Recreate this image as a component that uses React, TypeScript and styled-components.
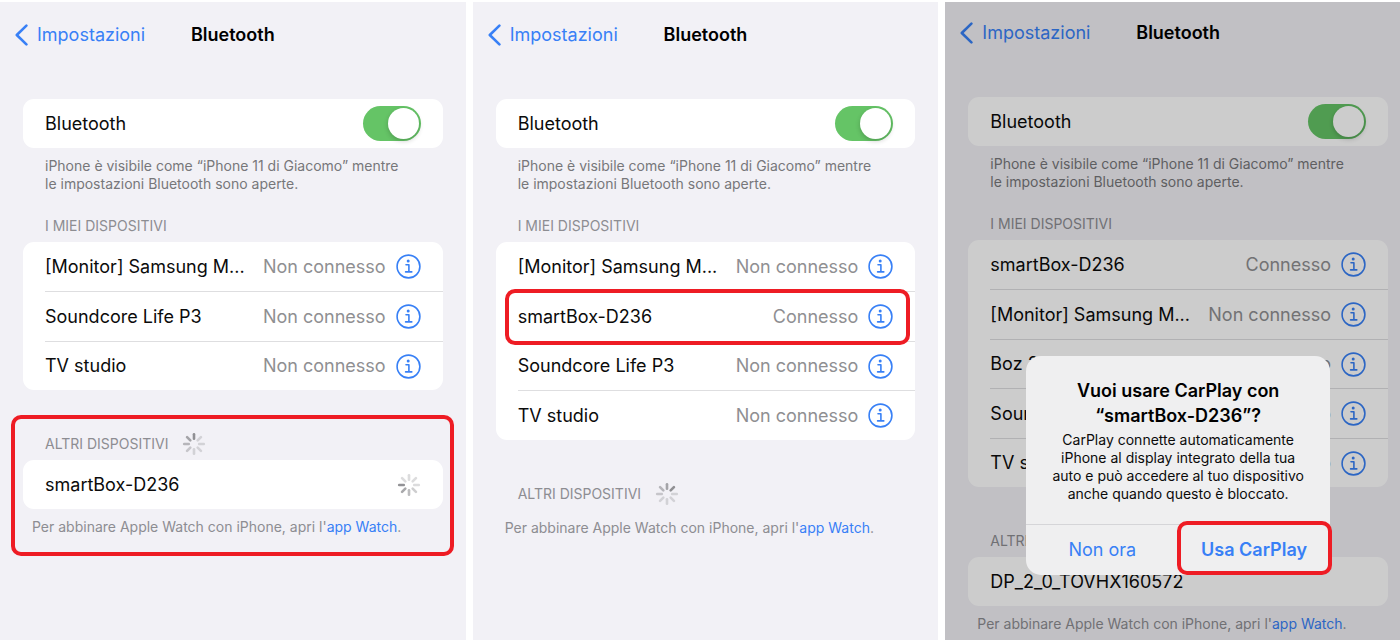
import React from 'react';
import styled, { createGlobalStyle, css } from 'styled-components';

const GlobalStyle = createGlobalStyle`
  *, *::before, *::after { box-sizing: border-box; }
  body {
    margin: 0;
    background: #fff;
    color: #0b0b0b;
    font-family: Inter, 'Liberation Sans', sans-serif;
    font-size: 18px;
    line-height: 24px;
  }
  button { font: inherit; border: 0; padding: 0; background: none; cursor: pointer; }
  h1, h2, p, ul { margin: 0; padding: 0; font-weight: inherit; font-size: inherit; }
`;

const blue = '#3880f6';
const red = '#ee1c24';

const Page = styled.main`
  overflow: hidden;
  min-height: 100vh;
  display: flex;
  padding-top: 2px;
`;

/* The last phone runs slightly past the right edge of the window. */
const Phones = styled.div`
  flex: 1;
  display: grid;
  grid-template-columns: repeat(3, minmax(0, 1fr));
  gap: 7px;
  margin-right: -11px;
`;

const Phone = styled.section<{ $raised?: boolean }>`
  position: relative;
  background: #f2f1f6;
  padding: ${p => (p.$raised ? 15 : 17)}px 23px 8px;
`;

const NavBar = styled.header`
  display: grid;
  grid-template-columns: 1fr auto 1fr;
  align-items: center;
  height: 32px;
  margin: 0 -8px 48px;
`;

const BackLink = styled.a`
  display: flex;
  align-items: center;
  gap: 9px;
  color: ${blue};
  text-decoration: none;
`;

const Title = styled.h1`
  color: #000;
  font-weight: 600;
`;

const Card = styled.ul`
  list-style: none;
  background: #fff;
  border-radius: 11px;
`;

const redFrame = css`
  content: '';
  position: absolute;
  border: 4px solid ${red};
  border-radius: 10px;
  pointer-events: none;
`;

const Row = styled.li<{ $marked?: boolean }>`
  position: relative;
  display: flex;
  padding-left: 22px;
  ${p => p.$marked && css`
    z-index: 1;
    &::after { ${redFrame} inset: -2px 5px -4px 9px; }
  `}
`;

const RowBody = styled.div`
  flex: 1;
  display: flex;
  align-items: center;
  gap: 10px;
  height: 49px;
  padding-right: 22px;
  ${Row} + ${Row} & { border-top: 1px solid #dedee0; }
  ${Row}:nth-child(even) & { height: 50px; }
`;

const Name = styled.span`
  flex: 1;
  white-space: nowrap;
`;

const ToggleLabel = styled.label`
  flex: 1;
`;

const State = styled.span`
  color: #8f8f92;
  white-space: nowrap;
`;

const InfoButton = styled.button`
  display: flex;
  color: ${blue};
`;

const Toggle = styled.input`
  appearance: none;
  width: 58px;
  height: 35px;
  margin: 0;
  padding: 2px;
  border-radius: 18px;
  background: #65c466;
  display: flex;
  justify-content: flex-end;
  cursor: pointer;
  &::before {
    content: '';
    width: 31px;
    height: 31px;
    border-radius: 50%;
    background: #fff;
    box-shadow: 0 2px 5px rgba(0, 0, 0, 0.2);
  }
  &:not(:checked) { background: #e9e9eb; justify-content: flex-start; }
`;

const Note = styled.p`
  padding: 9px 22px 0;
  color: #77777a;
  font-size: 14px;
  line-height: 18px;
`;

const ListHeading = styled.h2`
  display: flex;
  align-items: center;
  gap: 14px;
  height: 24px;
  padding-left: 22px;
  color: #8d8d92;
  && { font-size: 14px; }
  line-height: 18px;
`;

const MyDevices = styled.div`
  margin-top: 21px;
  ${Card} { margin-top: 4px; }
`;

const OtherDevices = styled.div<{ $marked?: boolean }>`
  position: relative;
  margin-top: 42px;
  ${ListHeading} { margin-bottom: 4px; }
  ${p => p.$marked && css`&::after { ${redFrame} inset: -17px -11px -20px -12px; }`}
`;

const WatchHint = styled.p`
  padding: 9px 9px 0;
  color: #8d8d92;
  font-size: 14px;
  line-height: 18px;
  white-space: nowrap;
  a { color: ${blue}; text-decoration: none; }
`;

const Scrim = styled.div`
  position: absolute;
  inset: 0;
  z-index: 2;
  padding: 354px 81px 0;
  background: rgba(0, 0, 0, 0.2);
`;

const Dialog = styled.div`
  background: #efeff0;
  border-radius: 15px;
  text-align: center;
`;

const DialogText = styled.div`
  padding: 22px 16px 21px;
  border-bottom: 1px solid #d5d5d8;
`;

const DialogTitle = styled.h2`
  color: #000;
  line-height: 25px;
  && { font-weight: 600; }
`;

const DialogMessage = styled.p`
  padding-top: 3px;
  font-size: 14px;
  line-height: 18px;
`;

const DialogActions = styled.div`
  display: grid;
  grid-template-columns: 1fr 1fr;
`;

const DialogButton = styled.button<{ $primary?: boolean }>`
  position: relative;
  height: 50px;
  color: ${blue};
  font-weight: ${p => (p.$primary ? 600 : 400)};
  ${p => p.$primary && css`&::after { ${redFrame} inset: -4px -2px 0 -1px; }`}
`;

const Chevron = () => (
  <svg width="13" height="22" viewBox="0 0 13 22" fill="none" stroke="currentColor" strokeWidth="2.6" strokeLinecap="round" strokeLinejoin="round" aria-hidden="true">
    <path d="M11.4 1.6 1.8 11l9.6 9.4" />
  </svg>
);

const InfoIcon = () => (
  <svg width="25" height="25" viewBox="0 0 25 25" fill="none" stroke="currentColor" strokeWidth="1.6" aria-hidden="true">
    <circle cx="12.5" cy="12.5" r="11.4" />
    <circle cx="12.2" cy="7" r="1.5" fill="currentColor" stroke="none" />
    <path d="M10 10.8h2.9v7M9.6 17.9h6.2" strokeWidth="1.6" strokeLinecap="round" strokeLinejoin="round" />
  </svg>
);

/* Eight spokes, clockwise from the top; `lead` is the darkest one. */
const Spinner = ({ lead }: { lead: number }) => (
  <svg width="24" height="24" viewBox="0 0 24 24" stroke="#808084" strokeWidth="2.6" strokeLinecap="round" role="img" aria-label="Ricerca in corso">
    {Array.from({ length: 8 }, (_, i) => {
      const age = (lead - i + 8) % 8;
      return (
        <path key={i} d="M12 2.2v4.6" transform={`rotate(${i * 45} 12 12)`} opacity={[0.85, 0.68, 0.52, 0.38, 0.27, 0.27, 0.27, 0.27][age]} />
      );
    })}
  </svg>
);

type Device = { name: string; connected?: boolean; marked?: boolean };

type PhoneProps = {
  id: string;
  devices: Device[];
  headingLead: number;
  other?: React.ReactNode;
  raised?: boolean;
  otherMarked?: boolean;
  children?: React.ReactNode;
};

const BluetoothScreen = ({ id, devices, headingLead, other, raised, otherMarked, children }: PhoneProps) => (
  <Phone $raised={raised}>
    <NavBar>
      <BackLink href="#impostazioni"><Chevron />Impostazioni</BackLink>
      <Title>Bluetooth</Title>
    </NavBar>
    <Card>
      <Row>
        <RowBody>
          <ToggleLabel htmlFor={id}>Bluetooth</ToggleLabel>
          <Toggle id={id} type="checkbox" defaultChecked />
        </RowBody>
      </Row>
    </Card>
    <Note>
      iPhone è visibile come “iPhone 11 di Giacomo” mentre<br />
      le impostazioni Bluetooth sono aperte.
    </Note>
    <MyDevices>
      <ListHeading>I MIEI DISPOSITIVI</ListHeading>
      <Card>
        {devices.map(d => (
          <Row key={d.name} $marked={d.marked}>
            <RowBody>
              <Name>{d.name}</Name>
              <State>{d.connected ? 'Connesso' : 'Non connesso'}</State>
              <InfoButton type="button" aria-label={`Info su ${d.name}`}><InfoIcon /></InfoButton>
            </RowBody>
          </Row>
        ))}
      </Card>
    </MyDevices>
    <OtherDevices $marked={otherMarked}>
      <ListHeading>ALTRI DISPOSITIVI<Spinner lead={headingLead} /></ListHeading>
      {other && <Card><Row><RowBody>{other}</RowBody></Row></Card>}
      <WatchHint>Per abbinare Apple Watch con iPhone, apri l'<a href="#watch">app Watch</a>.</WatchHint>
    </OtherDevices>
    {children}
  </Phone>
);

const monitor = { name: '[Monitor] Samsung M...' };
const soundcore = { name: 'Soundcore Life P3' };
const tv = { name: 'TV studio' };

export default function App() {
  return (
    <>
      <GlobalStyle />
      <Page>
        <Phones>
          <BluetoothScreen
            id="bt-search"
            devices={[monitor, soundcore, tv]}
            headingLead={0}
            otherMarked
            other={<><Name>smartBox-D236</Name><Spinner lead={6} /></>}
          />
          <BluetoothScreen
            id="bt-connected"
            devices={[monitor, { name: 'smartBox-D236', connected: true, marked: true }, soundcore, tv]}
            headingLead={1}
          />
          <BluetoothScreen
            id="bt-carplay"
            raised
            devices={[{ name: 'smartBox-D236', connected: true }, monitor, { name: 'Boz 2' }, soundcore, tv]}
            headingLead={0}
            other={<Name>DP_2_0_TOVHX160572</Name>}
          >
            <Scrim>
              <Dialog role="dialog" aria-labelledby="carplay-title">
                <DialogText>
                  <DialogTitle id="carplay-title">Vuoi usare CarPlay con<br />“smartBox-D236”?</DialogTitle>
                  <DialogMessage>
                    CarPlay connette automaticamente<br />
                    iPhone al display integrato della tua<br />
                    auto e può accedere al tuo dispositivo<br />
                    anche quando questo è bloccato.
                  </DialogMessage>
                </DialogText>
                <DialogActions>
                  <DialogButton type="button">Non ora</DialogButton>
                  <DialogButton type="button" $primary>Usa CarPlay</DialogButton>
                </DialogActions>
              </Dialog>
            </Scrim>
          </BluetoothScreen>
        </Phones>
      </Page>
    </>
  );
}
